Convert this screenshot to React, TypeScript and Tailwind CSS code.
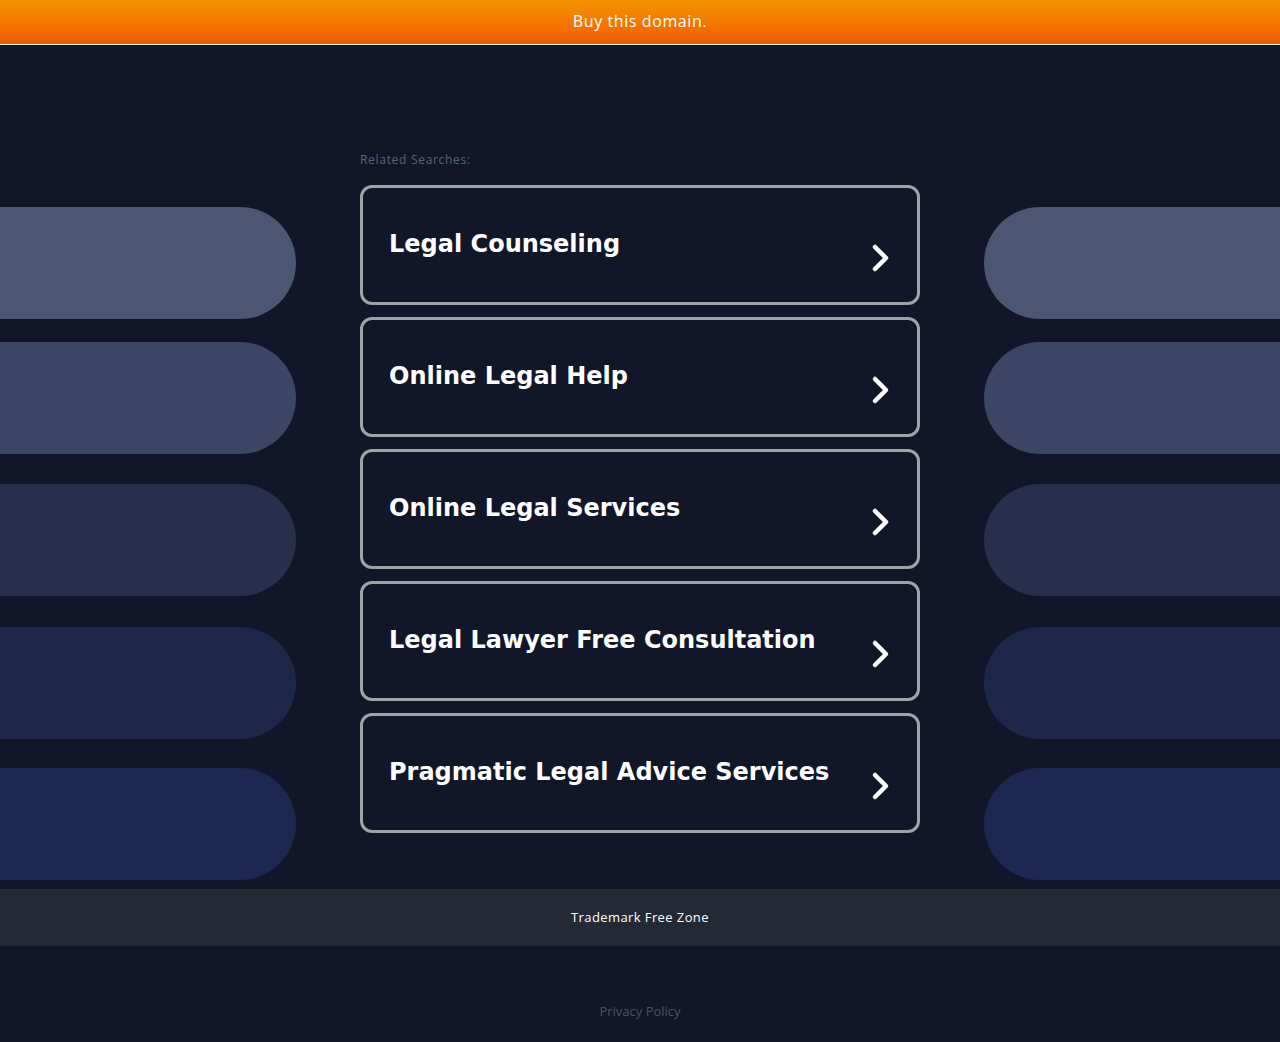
import React from "react";

const pills = [
  { c: "bg-[#4c5673]", mt: "mt-[162px]" },
  { c: "bg-[#3d4564]", mt: "mt-[23px]" },
  { c: "bg-[#272f4c]", mt: "mt-[30px]" },
  { c: "bg-[#1e2748]", mt: "mt-[31px]" },
  { c: "bg-[#1c2850]", mt: "mt-[29px]" },
];

const items = [
  "Legal Counseling",
  "Online Legal Help",
  "Online Legal Services",
  "Legal Lawyer Free Consultation",
  "Pragmatic Legal Advice Services",
];

function Chevron() {
  return (
    <svg width="24" height="30" viewBox="0 0 24 30" className="mt-[26px] shrink-0">
      <polyline
        points="6,4 17,15 6,26"
        fill="none"
        stroke="#ffffff"
        strokeWidth="4.5"
        strokeLinecap="round"
        strokeLinejoin="round"
      />
    </svg>
  );
}

function PillColumn({ side }: { side: "left" | "right" }) {
  return (
    <div className="w-[296px] flex flex-col shrink-0">
      {pills.map((p, i) => (
        <div
          key={i}
          className={`${p.mt} h-[112px] ${p.c} ${side === "left" ? "rounded-r-[56px]" : "rounded-l-[56px]"}`}
        />
      ))}
    </div>
  );
}

export default function App() {
  return (
    <div className="min-h-[1042px] bg-[#111629] flex flex-col">
      <div className="h-[45px] bg-gradient-to-b from-[#f39400] to-[#f05a00] border-b border-white flex items-center justify-center">
        <span className="text-white text-[16px] font-medium font-[family-name:Open_Sans,sans-serif] tracking-[0.6px] -mt-[2px]">
          Buy this domain.
        </span>
      </div>
      <div className="flex h-[844px]">
        <PillColumn side="left" />
        <div className="ml-[64px] mr-[64px] w-[560px] shrink-0 flex flex-col pt-[107px]">
          <div className="text-[12px] leading-[16px] text-[#5b6378] font-medium font-[family-name:Open_Sans,sans-serif] tracking-[0.7px] mb-[17px]">
            Related Searches:
          </div>
          <div className="flex flex-col gap-[12px]">
            {items.map((t) => (
              <div
                key={t}
                className="h-[120px] border-[3px] border-[#a2a2a6] rounded-[12px] flex items-center justify-between pl-[26px] pr-[24px]"
              >
                <span className="text-white text-[24px] font-bold font-[family-name:DejaVu_Sans,sans-serif] -mt-[3px]">
                  {t}
                </span>
                <Chevron />
              </div>
            ))}
          </div>
        </div>
        <PillColumn side="right" />
      </div>
      <div className="h-[57px] bg-[#232a35] flex items-center justify-center">
        <span className="text-white text-[13px] font-medium font-[family-name:Open_Sans,sans-serif] tracking-[0.4px]">
          Trademark Free Zone
        </span>
      </div>
      <div className="flex justify-center pt-[57px]">
        <span className="text-[#4a5168] text-[13px] leading-[16px] font-[family-name:Open_Sans,sans-serif]">
          Privacy Policy
        </span>
      </div>
    </div>
  );
}
